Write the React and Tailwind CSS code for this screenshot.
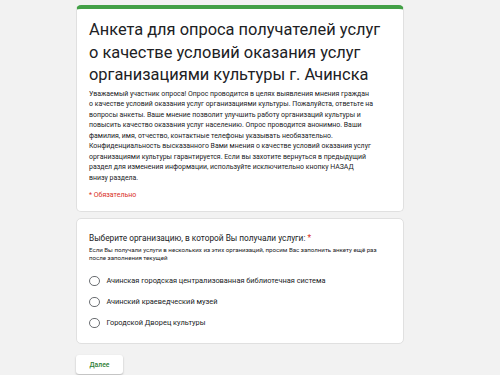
import React from 'react'

const intro = [
  'Уважаемый участник опроса! Опрос проводится в целях выявления мнения граждан',
  'о качестве условий оказания услуг организациями культуры. Пожалуйста, ответьте на',
  'вопросы анкеты. Ваше мнение позволит улучшить работу организаций культуры и',
  'повысить качество оказания услуг населению. Опрос проводится анонимно. Ваши',
  'фамилия, имя, отчество, контактные телефоны указывать необязательно.',
  'Конфиденциальность высказанного Вами мнения о качестве условий оказания услуг',
  'организациями культуры гарантируется. Если вы захотите вернуться в предыдущий',
  'раздел для изменения информации, используйте исключительно кнопку НАЗАД',
  'внизу раздела.',
]

const options = [
  'Ачинская городская централизованная библиотечная система',
  'Ачинский краеведческий музей',
  'Городской Дворец культуры',
]

function Radio({ label }) {
  return (
    <label className="flex items-center gap-[7px] h-[21px]">
      <span className="w-[10.5px] h-[10.5px] rounded-full border-[1.4px] border-[#6b6e72] shrink-0" />
      <span className="text-[7.4px] text-[#202124]">{label}</span>
    </label>
  )
}

export default function App() {
  return (
    <div
      className="h-[375px] overflow-hidden bg-[#f2f2f2] pt-[5px] pl-[76px]"
      style={{ fontFamily: 'Roboto, "Noto Sans", Arial, sans-serif' }}
    >
      <div className="w-[328px] flex flex-col">
        {/* Header card */}
        <div className="bg-white rounded-[5px] border border-[#e0e0e0] border-t-[4px] border-t-[#43a047] px-[12px] pt-[10px] pb-[11px]">
          <h1 className="text-[16.4px] leading-[22.5px] text-[#202124]">
            Анкета для опроса получателей услуг о качестве условий оказания услуг организациями культуры г. Ачинска
          </h1>
          <div className="mt-[2px] text-[6.95px] leading-[10.5px] text-[#202124] whitespace-nowrap">
            {intro.map(l => <div key={l}>{l}</div>)}
          </div>
          <div className="mt-[6.5px] text-[7px] leading-[10.5px] text-[#d93025]">* Обязательно</div>
        </div>

        {/* Question card */}
        <div className="mt-[6px] bg-white rounded-[5px] border border-[#e0e0e0] px-[12px] pt-[13px] pb-[9px]">
          <div className="text-[8.3px] leading-[12px] text-[#202124]">
            Выберите организацию, в которой Вы получали услуги: <span className="text-[#d93025]">*</span>
          </div>
          <div className="mt-[2px] text-[6.15px] leading-[8px] text-[#202124] whitespace-nowrap">
            <div>Если Вы получали услуги в нескольких из этих организаций, просим Вас заполнить анкету ещё раз</div>
            <div>после заполнения текущей</div>
          </div>
          <div className="mt-[8.5px] flex flex-col">
            {options.map(o => <Radio key={o} label={o} />)}
          </div>
        </div>

        {/* Next */}
        <div className="mt-[6px]">
          <button className="w-[47px] h-[19px] bg-white rounded-[3px] shadow-[0_1px_2px_rgba(0,0,0,0.25)] text-[6.8px] font-medium text-[#2e7d32]">
            Далее
          </button>
        </div>
      </div>
    </div>
  )
}
